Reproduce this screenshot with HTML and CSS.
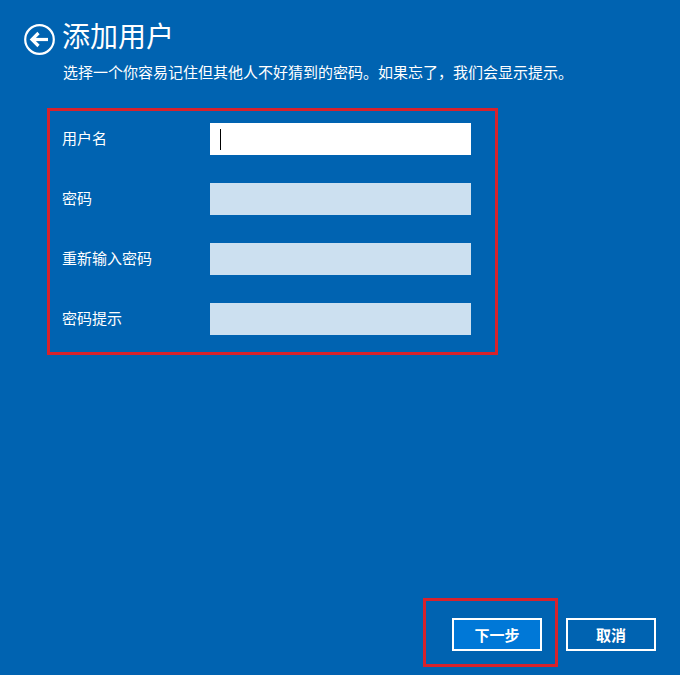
FILE: index.html
```html
<!DOCTYPE html>
<html lang="zh-CN">
<head>
<meta charset="utf-8">
<title>添加用户</title>
<link rel="stylesheet" href="styles.css">
</head>
<body>
<div class="page">
  <div class="header">
    <svg class="back" width="31" height="31" viewBox="0 0 31 31">
      <circle cx="15.5" cy="15.5" r="14.3" fill="none" stroke="#fff" stroke-width="2.2"/>
      <path d="M8 15.5 H24" fill="none" stroke="#fff" stroke-width="3.2"/>
      <path d="M14.5 9 L8 15.5 L14.5 22" fill="none" stroke="#fff" stroke-width="3.2" stroke-linejoin="miter"/>
    </svg>
    <h1 class="title">添加用户</h1>
  </div>
  <p class="subtitle">选择一个你容易记住但其他人不好猜到的密码。如果忘了，我们会显示提示。</p>

  <div class="form-box">
    <div class="form-grid">
      <label class="label">用户名</label>
      <div class="field active"><span class="caret"></span></div>
      <label class="label">密码</label>
      <div class="field"></div>
      <label class="label">重新输入密码</label>
      <div class="field"></div>
      <label class="label">密码提示</label>
      <div class="field"></div>
    </div>
  </div>

  <div class="footer">
    <div class="highlight">
      <button class="btn primary">下一步</button>
    </div>
    <button class="btn secondary">取消</button>
  </div>
</div>
</body>
</html>
```

FILE: styles.css
```css
html, body {
  margin: 0;
  padding: 0;
  background: #0063b1;
}
body {
  font-family: "Noto Sans CJK SC", "Noto Sans", sans-serif;
  color: #fff;
}
.page {
  width: 680px;
  height: 675px;
  display: flex;
  flex-direction: column;
  box-sizing: border-box;
  overflow: hidden;
}
.header {
  display: flex;
  align-items: flex-start;
  padding-top: 21px;
  padding-left: 24px;
}
.back {
  display: block;
  margin-top: 3px;
  flex: none;
}
.title {
  margin: 0 0 0 7px;
  font-size: 28px;
  line-height: 28px;
  font-weight: 400;
}
.subtitle {
  margin: 9px 0 0 63px;
  font-size: 15px;
  line-height: 15px;
}
.form-box {
  margin: 29px 0 0 47px;
  width: 451px;
  height: 247px;
  box-sizing: border-box;
  border: 3px solid #d8222c;
  padding: 12px 0 0 12px;
}
.form-grid {
  display: grid;
  grid-template-columns: 148px 261px;
  grid-auto-rows: 32px;
  row-gap: 28px;
  align-items: center;
}
.label {
  font-size: 15px;
  line-height: 15px;
  padding-bottom: 3px;
}
.field {
  height: 32px;
  background: #cce0f0;
  display: flex;
  align-items: center;
}
.field.active {
  background: #fff;
}
.caret {
  display: block;
  width: 1px;
  height: 21px;
  margin-left: 10px;
  background: #000;
}
.footer {
  margin-top: auto;
  display: flex;
  justify-content: flex-end;
  align-items: flex-start;
  padding: 0 24px 8px 0;
  gap: 8px;
}
.highlight {
  border: 3px solid #d8222c;
  padding: 17px 13px 13px 26px;
  display: flex;
}
.btn {
  width: 90px;
  height: 33px;
  box-sizing: border-box;
  border: 2px solid #fff;
  color: #fff;
  font-family: "Noto Sans CJK SC", sans-serif;
  font-size: 15px;
  font-weight: 700;
  line-height: 1;
  padding: 0;
  margin: 0;
}
.primary {
  background: #0078d7;
}
.secondary {
  background: transparent;
  margin-top: 20px;
}
```
